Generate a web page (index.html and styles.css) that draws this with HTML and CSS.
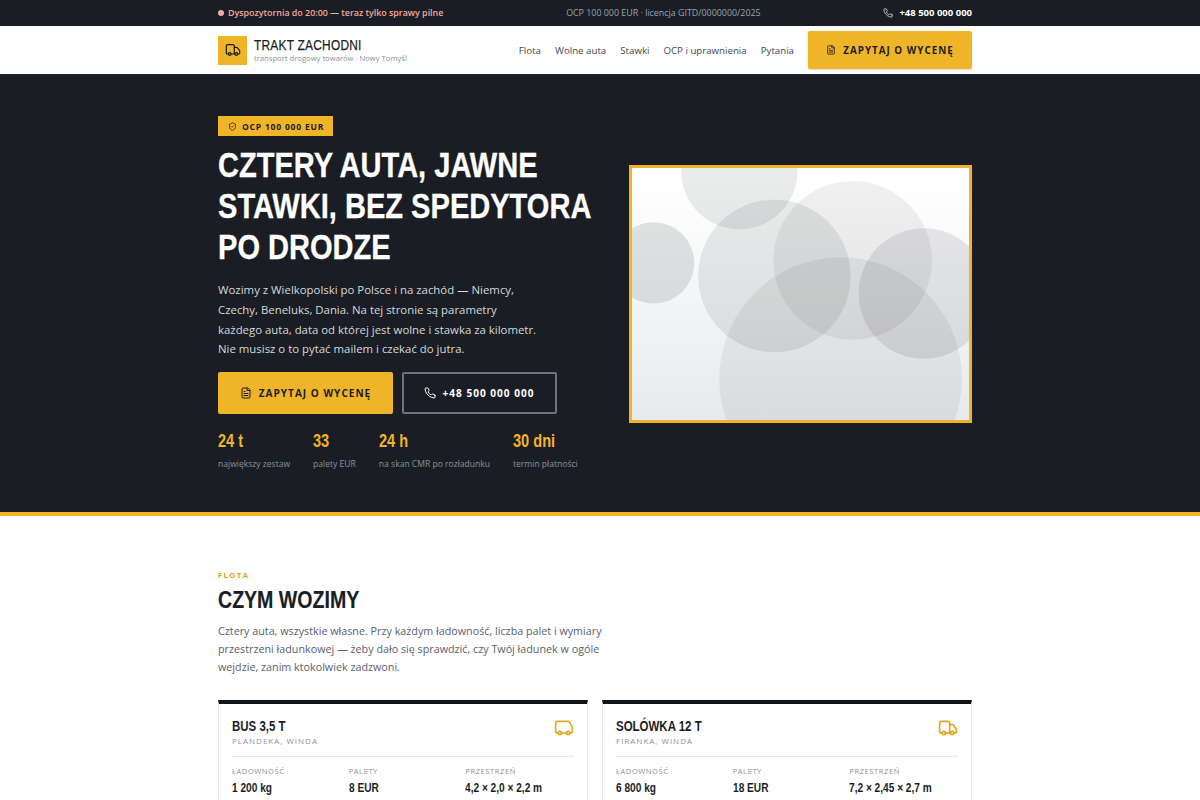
FILE: index.html
```html
<!DOCTYPE html>
<html lang="pl">
<head>
<meta charset="utf-8">
<title>Trakt Zachodni</title>
<link rel="stylesheet" href="styles.css">
</head>
<body>
<div class="topbar"><div class="wrap topbar-in">
  <span class="alert"><i class="dot"></i>Dyspozytornia do 20:00 — teraz tylko sprawy pilne</span>
  <span class="lic">OCP 100 000 EUR · licencja GITD/0000000/2025</span>
  <span class="tel"><svg class="ic" viewBox="0 0 24 24"><path d="M22 16.9v3a2 2 0 0 1-2.2 2 19.8 19.8 0 0 1-8.6-3.1 19.5 19.5 0 0 1-6-6A19.8 19.8 0 0 1 2.1 4.2 2 2 0 0 1 4.1 2h3a2 2 0 0 1 2 1.7c.1 1 .4 1.9.7 2.8a2 2 0 0 1-.5 2.1L8.1 9.9a16 16 0 0 0 6 6l1.3-1.3a2 2 0 0 1 2.1-.4c.9.3 1.8.6 2.8.7a2 2 0 0 1 1.7 2z"/></svg>+48 500 000 000</span>
</div></div>
<header class="head"><div class="wrap head-in">
  <a class="brand">
    <span class="logo"><svg viewBox="0 0 24 24"><path d="M14 18V6a2 2 0 0 0-2-2H4a2 2 0 0 0-2 2v11a1 1 0 0 0 1 1h2"/><path d="M15 18H9"/><path d="M19 18h2a1 1 0 0 0 1-1v-3.650a1 1 0 0 0-.22-.624l-3.480-4.350A1 1 0 0 0 17.520 8H14"/><circle cx="17" cy="18" r="2"/><circle cx="7" cy="18" r="2"/></svg></span>
    <span class="brand-t"><b class="narrow">TRAKT ZACHODNI</b><small>transport drogowy towarów · Nowy Tomyśl</small></span>
  </a>
  <nav class="nav">
    <a>Flota</a><a>Wolne auta</a><a>Stawki</a><a>OCP i uprawnienia</a><a>Pytania</a>
    <a class="btn btn-y btn-head"><svg class="ic" viewBox="0 0 24 24"><path d="M15 2H6a2 2 0 0 0-2 2v16a2 2 0 0 0 2 2h12a2 2 0 0 0 2-2V7z"/><path d="M14 2v5h6"/><path d="M16 13H8M16 17H8M10 9H8"/></svg>ZAPYTAJ O WYCENĘ</a>
  </nav>
</div></header>
<section class="hero"><div class="wrap hero-in">
  <div class="hero-l">
    <span class="badge"><svg class="ic" viewBox="0 0 24 24"><path d="M20 13c0 5-3.500 7.500-7.660 8.950a1 1 0 0 1-.67-.01C7.500 20.500 4 18 4 13V6a1 1 0 0 1 1-1c2 0 4.500-1.200 6.240-2.720a1.170 1.170 0 0 1 1.520 0C14.510 3.810 17 5 19 5a1 1 0 0 1 1 1z"/><path d="m9 12 2 2 4-4"/></svg>OCP 100 000 EUR</span>
    <h1 class="narrow">CZTERY AUTA, JAWNE STAWKI, BEZ SPEDYTORA PO DRODZE</h1>
    <p class="lead">Wozimy z Wielkopolski po Polsce i na zachód — Niemcy, Czechy, Beneluks, Dania. Na tej stronie są parametry każdego auta, data od której jest wolne i stawka za kilometr. Nie musisz o to pytać mailem i czekać do jutra.</p>
    <div class="cta">
      <a class="btn btn-y btn-big"><svg class="ic" viewBox="0 0 24 24"><path d="M15 2H6a2 2 0 0 0-2 2v16a2 2 0 0 0 2 2h12a2 2 0 0 0 2-2V7z"/><path d="M14 2v5h6"/><path d="M16 13H8M16 17H8M10 9H8"/></svg>ZAPYTAJ O WYCENĘ</a>
      <a class="btn btn-o btn-big"><svg class="ic" viewBox="0 0 24 24"><path d="M22 16.9v3a2 2 0 0 1-2.2 2 19.8 19.8 0 0 1-8.6-3.1 19.5 19.5 0 0 1-6-6A19.8 19.8 0 0 1 2.1 4.2 2 2 0 0 1 4.1 2h3a2 2 0 0 1 2 1.7c.1 1 .4 1.9.7 2.8a2 2 0 0 1-.5 2.1L8.1 9.9a16 16 0 0 0 6 6l1.3-1.3a2 2 0 0 1 2.1-.4c.9.3 1.8.6 2.8.7a2 2 0 0 1 1.7 2z"/></svg>+48 500 000 000</a>
    </div>
    <div class="stats">
      <div><b class="narrow">24 t</b><span>największy zestaw</span></div>
      <div><b class="narrow">33</b><span>palety EUR</span></div>
      <div><b class="narrow">24 h</b><span>na skan CMR po rozładunku</span></div>
      <div><b class="narrow">30 dni</b><span>termin płatności</span></div>
    </div>
  </div>
  <div class="hero-pic">
    <svg viewBox="0 0 336 251" preserveAspectRatio="none">
      <circle cx="107" cy="3" r="58" fill-opacity=".09"/><circle cx="21.500" cy="94.500" r="40.500" fill-opacity=".12"/><circle cx="142" cy="107.500" r="76" fill-opacity=".09"/><circle cx="220" cy="92" r="79" fill-opacity=".065"/><circle cx="291" cy="125" r="65" fill-opacity=".1"/><circle cx="208" cy="210" r="121" fill-opacity=".065"/>
    </svg>
  </div>
</div></section>
<section class="fleet"><div class="wrap">
  <div class="eyebrow">FLOTA</div>
  <h2 class="narrow">CZYM WOZIMY</h2>
  <p class="intro">Cztery auta, wszystkie własne. Przy każdym ładowność, liczba palet i wymiary przestrzeni ładunkowej — żeby dało się sprawdzić, czy Twój ładunek w ogóle wejdzie, zanim ktokolwiek zadzwoni.</p>
  <div class="cards">
    <article class="card">
      <div class="card-top"><div><h3 class="narrow">BUS 3,5 T</h3><div class="sub">PLANDEKA, WINDA</div></div>
        <svg class="truck" viewBox="0 0 24 24"><path d="M5 18H4a2 2 0 0 1-2-2V6a2 2 0 0 1 2-2h13a2 2 0 0 1 2 1.500l3 5.500v5a2 2 0 0 1-2 2h-1"/><path d="M9 18h6"/><circle cx="7" cy="18" r="2"/><circle cx="17" cy="18" r="2"/></svg></div>
      <div class="specs">
        <div><span>ŁADOWNOŚĆ</span><b class="narrow">1 200 kg</b></div>
        <div><span>PALETY</span><b class="narrow">8 EUR</b></div>
        <div><span>PRZESTRZEŃ</span><b class="narrow">4,2 × 2,0 × 2,2 m</b></div>
      </div>
    </article>
    <article class="card">
      <div class="card-top"><div><h3 class="narrow">SOLÓWKA 12 T</h3><div class="sub">FIRANKA, WINDA</div></div>
        <svg class="truck" viewBox="0 0 24 24"><path d="M14 18V6a2 2 0 0 0-2-2H4a2 2 0 0 0-2 2v11a1 1 0 0 0 1 1h2"/><path d="M15 18H9"/><path d="M19 18h2a1 1 0 0 0 1-1v-3.650a1 1 0 0 0-.22-.624l-3.480-4.350A1 1 0 0 0 17.520 8H14"/><circle cx="17" cy="18" r="2"/><circle cx="7" cy="18" r="2"/></svg></div>
      <div class="specs">
        <div><span>ŁADOWNOŚĆ</span><b class="narrow">6 800 kg</b></div>
        <div><span>PALETY</span><b class="narrow">18 EUR</b></div>
        <div><span>PRZESTRZEŃ</span><b class="narrow">7,2 × 2,45 × 2,7 m</b></div>
      </div>
    </article>
  </div>
</div></section>
</body>
</html>
```
FILE: styles.css
```css
* { box-sizing: border-box; }
html, body { margin: 0; padding: 0; }
body { font-family: "Open Sans", "Noto Sans", sans-serif; color: #1a1e24; background: #fff; font-size: 12px; }
.wrap { width: 754px; margin: 0 228px 0 218px; }
svg { fill: none; stroke: currentColor; stroke-width: 2; stroke-linecap: round; stroke-linejoin: round; flex: none; }
.ic { width: 12px; height: 12px; }
.narrow { display: block; font-family: "Liberation Sans", sans-serif; font-weight: 700; transform: scaleX(.82); transform-origin: left center; white-space: nowrap; }

.topbar { background: #1a1e24; height: 26px; font-size: 8.900px; line-height: 26px; color: #9ca3af; }
.topbar-in { display: flex; justify-content: space-between; align-items: center; height: 26px; }
.alert { color: #f2a99c; font-weight: 600; display: flex; align-items: center; gap: 4px; }
.dot { width: 6px; height: 6px; border-radius: 50%; background: #f2a99c; }
.tel { color: #fff; font-weight: 700; font-size: 9.500px; display: flex; align-items: center; gap: 6px; }
.tel .ic { width: 10px; height: 10px; color: #d8dade; }

.head { background: #fff; height: 48px; }
.head-in { display: flex; justify-content: space-between; align-items: center; height: 48px; }
.brand { display: flex; align-items: center; gap: 7px; }
.logo { width: 29px; height: 29px; background: #f0b429; display: flex; align-items: center; justify-content: center; color: #1a1e24; }
.logo svg { width: 16px; height: 16px; stroke-width: 1.800; }
.brand-t { display: flex; flex-direction: column; }
.brand-t b { font-size: 14.500px; font-weight: 400; line-height: 15px; letter-spacing: .3px; color: #1a1e24; -webkit-text-stroke: .25px #1a1e24; }
.brand-t small { font-size: 7.650px; line-height: 10px; color: #8a9099; }
.nav { display: flex; align-items: center; gap: 14px; font-size: 9.700px; color: #3f4650; font-weight: 500; }
.btn { display: flex; align-items: center; justify-content: center; gap: 7px; font-weight: 700; letter-spacing: 1px; border-radius: 2px; }
.btn-y { background: #f0b429; color: #1a1e24; }
.btn-head { width: 164px; height: 38px; font-size: 9.850px; box-shadow: 0 1px 2px rgba(0,0,0,.15); }
.btn-head .ic { width: 10px; height: 10px; }

.hero { background: #1a1e24; border-bottom: 4px solid #f0b429; height: 442px; color: #fff; }
.hero-in { display: flex; justify-content: space-between; align-items: center; height: 438px; }
.hero-l { width: 374px; flex: none; }
.badge { display: inline-flex; align-items: center; gap: 5px; background: #f0b429; color: #1a1e24; height: 20px; padding: 0 9px 0 10px; font-size: 8.500px; font-weight: 700; letter-spacing: .8px; vertical-align: top; }
.badge .ic { width: 9px; height: 9px; }
h1.narrow { font-size: 35px; line-height: 41px; margin: 8px 0 13px; color: #fff; width: 451px; white-space: normal; transform: scaleX(.83); transform-origin: left top; -webkit-text-stroke: .3px #fff; }
.lead { margin: 0 0 13px; font-size: 11.400px; line-height: 19.650px; color: #d5d8dc; width: 325px; }
.cta { display: flex; gap: 8.500px; }
.btn-big { height: 42px; font-size: 10.050px; letter-spacing: 1px; }
.cta .btn-y { width: 175px; }
.btn-o { width: 155px; border: 2px solid #6b7280; color: #fff; }
.stats { display: flex; gap: 23px; margin-top: 16px; }
.stats div { display: flex; flex-direction: column; }
.stats b { color: #f0b429; font-size: 18px; line-height: 22px; transform: scaleX(.81); }
.stats span { font-size: 8.550px; line-height: 12px; color: #8b919a; margin-top: 6px; }
.hero-pic { width: 343px; height: 258px; margin-top: 2px; border: 3px solid #f0b429; background: linear-gradient(#fff 5%, #e7eaed); }
.hero-pic svg { display: block; width: 100%; height: 100%; stroke: none; fill: #1a1e24; }

.fleet { padding: 54px 0 40px; }
.eyebrow { font-size: 7.500px; line-height: 10px; font-weight: 700; letter-spacing: 1.500px; color: #d99f1c; }
h2.narrow { font-size: 24px; line-height: 30px; margin: 5px 0 7px; color: #1a1e24; transform: scaleX(.815); -webkit-text-stroke: .2px #1a1e24; }
.intro { width: 400px; margin: 0 0 24px; font-size: 10.750px; line-height: 18px; color: #5a616b; }
.cards { display: grid; grid-template-columns: 1fr 1fr; gap: 14px; }
.card { border: 1px solid #e7e9ec; border-top: 4px solid #111418; padding: 14px 13px; }
.card-top { display: flex; justify-content: space-between; padding-bottom: 9px; border-bottom: 1px solid #e7e9ec; }
h3.narrow { font-size: 14px; line-height: 16px; margin: 0; color: #1a1e24; }
.sub { font-size: 8px; line-height: 12px; letter-spacing: 1px; color: #8a9099; margin-top: 1px; }
.truck { width: 20px; height: 20px; color: #e0a820; }
.specs { display: grid; grid-template-columns: repeat(3, 1fr); column-gap: 8px; padding-top: 8px; }
.specs div { display: flex; flex-direction: column; }
.specs span { font-size: 7.500px; line-height: 12px; letter-spacing: .6px; color: #8a9099; }
.specs b { font-size: 12.500px; line-height: 16px; margin-top: 3px; color: #1a1e24; transform: scaleX(.81); }
```
